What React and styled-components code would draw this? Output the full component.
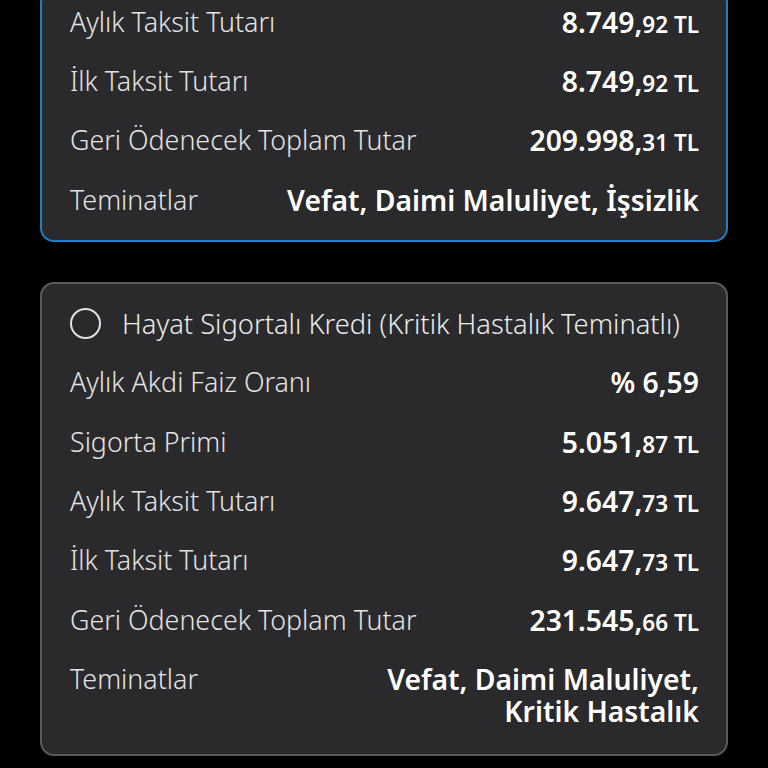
import React from "react";
import styled, { createGlobalStyle } from "styled-components";

const Global = createGlobalStyle`
  html, body { margin: 0; padding: 0; background: #000; }
  body { font-family: "Noto Sans", "Open Sans", sans-serif; overflow: hidden; }
`;

const Page = styled.div`
  display: flex;
  flex-direction: column;
  gap: 40px;
  padding: 0 40px;
  margin-top: -11px;
  width: 768px;
  box-sizing: border-box;
`;

const Card = styled.div`
  background: #2a2a2c;
  border: 2px solid ${(p) => (p.$active ? "#1f7fc6" : "#5a5a5c")};
  border-radius: 14px;
  padding: ${(p) => (p.$active ? "1px 27px 10px 28px" : "10px 27px 13px 28px")};
  width: 688px;
  box-sizing: border-box;
`;

const Title = styled.div`
  display: flex;
  align-items: center;
  gap: 21px;
  height: 59px;
  color: #ececec;
  font-weight: 300;
  font-size: 27.3px;
  white-space: nowrap;
`;

const Radio = styled.span`
  width: 27px;
  height: 27px;
  border-radius: 50%;
  border: 2px solid #e2e2e2;
  flex: none;
`;

const Row = styled.div`
  display: flex;
  justify-content: space-between;
  align-items: flex-start;
  padding: 13.7px 0;
  line-height: 32px;
`;

const Label = styled.span`
  color: #e4e4e4;
  font-weight: 300;
  font-size: 26.8px;
  line-height: 32px;
  white-space: nowrap;
`;

const Value = styled.span`
  color: #fff;
  font-weight: 600;
  font-size: 28.3px;
  line-height: 32px;
  text-align: right;
  white-space: nowrap;
`;

const Small = styled.span`
  font-size: 22.5px;
  line-height: 1;
`;

function Money({ whole, cents }) {
  return (
    <Value>
      {whole},<Small>{cents} TL</Small>
    </Value>
  );
}

export default function App() {
  return (
    <>
      <Global />
      <Page>
        <Card $active>
          <Row>
            <Label>Aylık Taksit Tutarı</Label>
            <Money whole="8.749" cents="92" />
          </Row>
          <Row>
            <Label>İlk Taksit Tutarı</Label>
            <Money whole="8.749" cents="92" />
          </Row>
          <Row>
            <Label>Geri Ödenecek Toplam Tutar</Label>
            <Money whole="209.998" cents="31" />
          </Row>
          <Row>
            <Label>Teminatlar</Label>
            <Value>Vefat, Daimi Maluliyet, İşsizlik</Value>
          </Row>
        </Card>
        <Card>
          <Title>
            <Radio />
            Hayat Sigortalı Kredi (Kritik Hastalık Teminatlı)
          </Title>
          <Row>
            <Label>Aylık Akdi Faiz Oranı</Label>
            <Value>% 6,59</Value>
          </Row>
          <Row>
            <Label>Sigorta Primi</Label>
            <Money whole="5.051" cents="87" />
          </Row>
          <Row>
            <Label>Aylık Taksit Tutarı</Label>
            <Money whole="9.647" cents="73" />
          </Row>
          <Row>
            <Label>İlk Taksit Tutarı</Label>
            <Money whole="9.647" cents="73" />
          </Row>
          <Row>
            <Label>Geri Ödenecek Toplam Tutar</Label>
            <Money whole="231.545" cents="66" />
          </Row>
          <Row>
            <Label>Teminatlar</Label>
            <Value>
              Vefat, Daimi Maluliyet,
              <br />
              Kritik Hastalık
            </Value>
          </Row>
        </Card>
      </Page>
    </>
  );
}
